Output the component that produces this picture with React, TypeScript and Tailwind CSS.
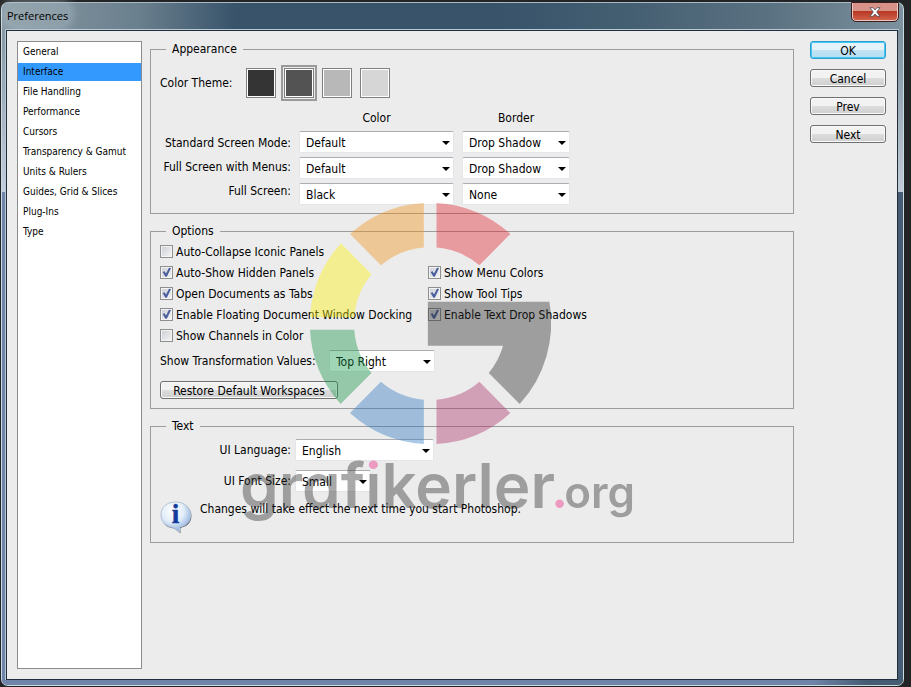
import { useId, useState } from "react";
import type { ReactNode } from "react";

const sections = [
  "General",
  "Interface",
  "File Handling",
  "Performance",
  "Cursors",
  "Transparency & Gamut",
  "Units & Rulers",
  "Guides, Grid & Slices",
  "Plug-Ins",
  "Type",
];

const themes = [
  { name: "Dark", color: "bg-[#343434]" },
  { name: "Medium dark", color: "bg-[#535353]" },
  { name: "Medium light", color: "bg-[#b8b8b8]" },
  { name: "Light", color: "bg-[#d6d6d6]" },
];

const screenModes = [
  { label: "Standard Screen Mode:", color: "Default", border: "Drop Shadow" },
  { label: "Full Screen with Menus:", color: "Default", border: "Drop Shadow" },
  { label: "Full Screen:", color: "Black", border: "None" },
];

function Group({ title, className, children }: { title: string; className: string; children: ReactNode }) {
  return (
    <fieldset className={`min-w-0 border border-[#9c9c9c] pl-[9px] ${className}`}>
      <legend className="ml-[6px] px-[6px] leading-[18px]">{title}</legend>
      {children}
    </fieldset>
  );
}

function Dropdown({
  id,
  label,
  value,
  options,
  width,
}: {
  id?: string;
  label?: string;
  value: string;
  options: string[];
  width: string;
}) {
  return (
    <div className={`relative h-[22px] shrink-0 ${width}`}>
      <select
        id={id}
        aria-label={label}
        defaultValue={value}
        className="h-full w-full appearance-none rounded-[2px] border border-[#e2e5ea] border-t-[#abadb3] bg-white pt-[2px] pl-[6px] text-black"
      >
        {options.map((o) => (
          <option key={o}>{o}</option>
        ))}
      </select>
      <svg className="pointer-events-none absolute top-[10px] right-[4px]" width="8" height="4" viewBox="0 0 8 4">
        <path d="M0 0H8L4 4Z" fill="#000" />
      </svg>
    </div>
  );
}

function Check({ label, initial = false }: { label: string; initial?: boolean }) {
  const id = useId();
  const [on, setOn] = useState(initial);
  return (
    <div className="flex h-[21px] items-center gap-[3px]">
      <span className="relative h-[13px] w-[13px]">
        <input
          id={id}
          type="checkbox"
          checked={on}
          onChange={() => setOn(!on)}
          className="block h-[13px] w-[13px] appearance-none border border-[#8e8f8f] bg-linear-to-br from-[#c9cdd3] to-[#f6f6f6] shadow-[inset_0_0_0_1px_#f4f4f4]"
        />
        {on && (
          <svg className="pointer-events-none absolute inset-0" width="13" height="13" viewBox="0 0 13 13">
            <path d="M2.600 6L4.600 5.200L6 7.600L9 1.800L11 2L6.800 10.800H5.400Z" fill="#4a5f9f" />
          </svg>
        )}
      </span>
      <label htmlFor={id}>{label}</label>
    </div>
  );
}

function PushButton({ children, primary = false, width }: { children: ReactNode; primary?: boolean; width: string }) {
  const skin = primary
    ? "border-[#2a9fd0] from-[#e4f3fa] from-50% via-[#c3e4f4] via-50% to-[#b3ddf2] shadow-[inset_0_0_0_1px_#45c8f2]"
    : "border-[#707070] from-[#f2f2f2] from-50% via-[#dddddd] via-50% to-[#cfcfcf] shadow-[inset_0_0_0_1px_#fafafa]";
  return (
    <button
      type="button"
      className={`flex h-[18px] items-center justify-center rounded-[3px] border bg-linear-to-b pt-px leading-[16px] ${width} ${skin}`}
    >
      {children}
    </button>
  );
}

function InfoIcon() {
  return (
    <svg width="32" height="33" viewBox="0 0 32 33" className="shrink-0" aria-hidden="true">
      <defs>
        <radialGradient id="balloon" cx="40%" cy="30%" r="75%">
          <stop offset="0" stopColor="#ffffff" />
          <stop offset="0.5" stopColor="#e3edf8" />
          <stop offset="1" stopColor="#7fa6da" />
        </radialGradient>
      </defs>
      <path
        d="M17 2C26 2 31.500 8 31.500 15C31.500 22 27 25.500 20.500 27V32.500L14 27.500C6 27 2 22 2 15C2 8 8 2 17 2Z"
        fill="#6d7685"
      />
      <path
        d="M15.500 1C24.500 1 30.500 6.500 30.500 14C30.500 21 25.500 25 19.500 26V31L13.500 26.500C5.500 25.500 1 20.500 1 14C1 6.500 6.500 1 15.500 1Z"
        fill="url(#balloon)"
        stroke="#b4c4d8"
      />
      <text
        x="15.500"
        y="22"
        textAnchor="middle"
        fontSize="27"
        fontWeight="700"
        fill="#123c9c"
        stroke="#123c9c"
        strokeWidth="0.500"
        className="font-['Liberation_Serif',serif]"
      >
        i
      </text>
    </svg>
  );
}

function Watermark() {
  return (
    <div className="pointer-events-none absolute top-[203px] left-[240px] text-[#2b2b2b] opacity-40">
      <svg className="ml-[70px] block" width="241" height="241" viewBox="30 39 724 724" aria-hidden="true">
        <path d="M372 39A362 362 0 0 0 150 132L243 226A229 229 0 0 1 372 173Z" fill="#f39218" />
        <path d="M410 39A362 362 0 0 1 632 132L539 226A229 229 0 0 0 410 173Z" fill="#e4242e" />
        <path d="M123 160A362 362 0 0 0 30 382H163A229 229 0 0 1 215 253Z" fill="#fff308" />
        <path d="M30 420A362 362 0 0 0 122 643L215 550A229 229 0 0 1 163 420Z" fill="#129547" />
        <path d="M150 670A362 362 0 0 0 372 763V630A229 229 0 0 1 243 576Z" fill="#2e79c1" />
        <path d="M410 763A362 362 0 0 0 632 670L539 576A229 229 0 0 1 410 630Z" fill="#ab3068" />
        <path d="M384 336H749A362 362 0 0 1 660 643L567 550A229 229 0 0 0 610 468H384Z" fill="#2b2b2b" />
      </svg>
      <p className="mt-[4px] font-['Inter',sans-serif] text-[62px] leading-[76px] font-semibold whitespace-nowrap [font-feature-settings:'cv11']">
        graf
        <span className="bg-linear-to-b from-[#ec217e] from-35% to-[#2b2b2b] to-35% bg-clip-text text-transparent">i</span>
        kerler<span className="-ml-[4px] text-[54px] text-[#ec217e]">.</span>
        <span className="-ml-[4px] text-[44px]">org</span>
      </p>
    </div>
  );
}

export default function App() {
  const [section, setSection] = useState("Interface");
  const [theme, setTheme] = useState(1);

  return (
    <div className="relative flex min-h-screen bg-[#232425] pt-[2px] pr-[7px] pb-px pl-px font-['DejaVu_Sans_Condensed','DejaVu_Sans',sans-serif] text-[12px] leading-[16px] text-black">
      <div className="flex flex-1 flex-col rounded-[7px] border border-[#c9dce4] border-t-[#a9bac4] bg-[linear-gradient(to_right,#8798a2,#6b808e_15%,#38536a_26%,#38536a_55%,#455f72_70%,#5a7181_85%,#7d919e)]">
        <header className="flex h-[27px] items-start justify-between pr-[5px] pl-[5px]">
          <h1 className="rounded-full bg-[#aab8c0]/40 pt-[4px] font-['Open_Sans',sans-serif] text-[11px] leading-[18px] shadow-[0_0_8px_6px_rgba(190,205,214,0.35)]">
            Preferences
          </h1>
          <button
            type="button"
            aria-label="Close"
            className="flex h-[18px] w-[46px] items-center justify-center rounded-b-[4px] border border-t-0 border-[#e8c9c4] bg-linear-to-b from-[#d79388] from-45% via-[#b7331f] via-45% to-[#d0604a] outline outline-[#3f1d1b]"
          >
            <svg width="12" height="10" viewBox="0 0 12 10" aria-hidden="true">
              <path
                d="M1 0.700H4L6 3L8 0.700H11L7.700 5L11 9.300H8L6 7L4 9.300H1L4.300 5Z"
                fill="#fff"
                stroke="#4a4a55"
                strokeWidth="0.800"
              />
            </svg>
          </button>
        </header>

        <div className="flex flex-1">
          <div className="w-[4px] bg-linear-to-b from-[#8798a2] via-[#c5cde0] via-25% to-[#6f84a8] to-25%" />
          <main className="flex flex-1 gap-[8px] border border-[#1f2d3d] bg-[#ececec] pt-[10px] pr-[11px] pb-[10px] pl-[10px] outline outline-[#b9c9d4]">
            <nav aria-label="Sections" className="w-[125px] shrink-0 border border-[#8b8c8e] bg-white">
              <ul className="text-[10px] leading-[18px]">
                {sections.map((s) => (
                  <li key={s} className="h-[20px] py-px">
                    <button
                      type="button"
                      onClick={() => setSection(s)}
                      className={`block h-[18px] w-full pl-[5px] text-left whitespace-nowrap ${s === section ? "bg-[#3399ff]" : ""}`}
                    >
                      {s}
                    </button>
                  </li>
                ))}
              </ul>
            </nav>

            <form className="flex min-w-0 flex-1 flex-col gap-[8px]">
              <Group title="Appearance" className="-mt-px h-[174px]">
                <div className="flex h-[50px] items-center">
                  <span className="w-[86px]">Color Theme:</span>
                  <div className="flex gap-[8px]">
                    {themes.map((t, i) => (
                      <button
                        key={t.name}
                        type="button"
                        aria-label={t.name}
                        aria-pressed={i === theme}
                        onClick={() => setTheme(i)}
                        className={`h-[30px] w-[30px] border border-[#808080] shadow-[inset_0_0_0_1px_#fff] ${t.color} ${i === theme ? "outline-2 outline-offset-1 outline-[#999999]" : ""}`}
                      />
                    ))}
                  </div>
                </div>
                <div className="ml-[139px] flex gap-[8px] pt-[2px] pb-[5px] text-center">
                  <span className="w-[155px]">Color</span>
                  <span className="w-[108px]">Border</span>
                </div>
                <div className="flex gap-[8px]">
                  <div className="flex w-[131px] flex-col text-right leading-[24px] whitespace-nowrap">
                    {screenModes.map((m, i) => (
                      <label key={m.label} htmlFor={`mode-${i}`}>
                        {m.label}
                      </label>
                    ))}
                  </div>
                  <div className="flex flex-col gap-[4px]">
                    {screenModes.map((m, i) => (
                      <div key={m.label} className="flex gap-[8px]">
                        <Dropdown id={`mode-${i}`} value={m.color} options={["Default", "Black"]} width="w-[155px]" />
                        <Dropdown
                          label={`${m.label} border`}
                          value={m.border}
                          options={["Drop Shadow", "None"]}
                          width="w-[108px]"
                        />
                      </div>
                    ))}
                  </div>
                </div>
              </Group>

              <Group title="Options" className="h-[187px]">
                <div className="flex pt-px">
                  <div className="w-[268px] whitespace-nowrap">
                    <Check label="Auto-Collapse Iconic Panels" />
                    <Check label="Auto-Show Hidden Panels" initial />
                    <Check label="Open Documents as Tabs" initial />
                    <Check label="Enable Floating Document Window Docking" initial />
                    <Check label="Show Channels in Color" />
                  </div>
                  <div className="pt-[21px] whitespace-nowrap">
                    <Check label="Show Menu Colors" initial />
                    <Check label="Show Tool Tips" initial />
                    <Check label="Enable Text Drop Shadows" initial />
                  </div>
                </div>
                <div className="flex items-center pt-[4px] pb-[9px]">
                  <label htmlFor="transform" className="w-[169px] whitespace-nowrap">
                    Show Transformation Values:
                  </label>
                  <Dropdown
                    id="transform"
                    value="Top Right"
                    options={["Never", "Top Left", "Top Right", "Bottom Left", "Bottom Right"]}
                    width="w-[106px]"
                  />
                </div>
                <PushButton width="w-[178px]">Restore Default Workspaces</PushButton>
              </Group>

              <Group title="Text" className="h-[126px]">
                <div className="flex flex-col gap-[9px] pt-[4px]">
                  <div className="flex items-center gap-[4px]">
                    <label htmlFor="language" className="w-[131px] text-right">
                      UI Language:
                    </label>
                    <Dropdown id="language" value="English" options={["English"]} width="w-[139px]" />
                  </div>
                  <div className="flex items-center gap-[4px]">
                    <label htmlFor="font-size" className="w-[131px] text-right">
                      UI Font Size:
                    </label>
                    <Dropdown id="font-size" value="Small" options={["Small", "Medium", "Large"]} width="w-[76px]" />
                  </div>
                </div>
                <div className="flex gap-[8px] pt-[9px]">
                  <InfoIcon />
                  <p>Changes will take effect the next time you start Photoshop.</p>
                </div>
              </Group>
            </form>

            <div className="ml-[8px] flex flex-col gap-[10px]">
              <PushButton width="w-[76px]" primary>
                OK
              </PushButton>
              <PushButton width="w-[76px]">Cancel</PushButton>
              <PushButton width="w-[76px]">Prev</PushButton>
              <PushButton width="w-[76px]">Next</PushButton>
            </div>
          </main>
          <div className="w-[5px] bg-linear-to-b from-[#7d919e] via-[#c3ccd8] via-25% to-[#455c72] to-25%" />
        </div>
        <footer className="h-[5px] rounded-b-[6px] bg-linear-to-r from-[#6f84a8] from-90% to-[#455c72] to-96%" />
      </div>
      <Watermark />
    </div>
  );
}
